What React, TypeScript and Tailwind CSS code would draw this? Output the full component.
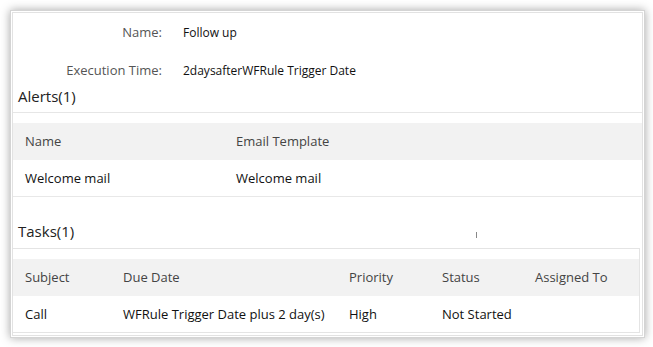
export default function App() {
  const font = { fontFamily: '"Open Sans", "Liberation Sans", sans-serif' };
  return (
    <div className="h-[347px] w-[653px] bg-white pl-[10px] pt-[10px]" style={font}>
      <div className="w-[635px] border border-[#d4d4d4] bg-white p-px shadow-[0_0_9px_rgba(0,0,0,0.35)]">
        <div className="flex h-[324px] flex-col border border-[#e2e2e2] text-[13px]">
          {/* details */}
          <div className="flex flex-col gap-[18px] pt-[10px]">
            <div className="flex h-[20px] items-center">
              <span className="w-[149px] text-right text-[#555]">Name:</span>
              <span className="ml-[21px] text-[12px] text-[#111]">Follow up</span>
            </div>
            <div className="flex h-[20px] items-center">
              <span className="w-[149px] text-right text-[#555]">Execution Time:</span>
              <span className="ml-[21px] text-[12px] text-[#111]">2daysafterWFRule Trigger Date</span>
            </div>
          </div>

          {/* alerts */}
          <div className="mt-[5px] border-b border-[#e6e6e6] pb-[6px] pl-[5px] text-[15px] leading-[20px] text-[#222]">
            Alerts(1)
          </div>
          <div className="mt-[10px] border-b border-[#e8e8e8]">
            <div className="flex h-[37px] items-center bg-[#f2f2f2] pt-px text-[#444]">
              <span className="w-[211px] pl-[12px]">Name</span>
              <span className="pl-[12px]">Email Template</span>
            </div>
            <div className="flex h-[36px] items-center pt-px text-[#111]">
              <span className="w-[211px] pl-[12px]">Welcome mail</span>
              <span className="pl-[12px]">Welcome mail</span>
            </div>
          </div>

          {/* tasks */}
          <div className="relative mt-[24px] h-[20px] pl-[5px] text-[15px] leading-[20px] text-[#222]">
            Tasks(1)
            <span className="absolute left-[463px] top-[11px] h-[6px] w-px bg-[#888]" />
          </div>
          <div className="mr-[2px] mt-[7px] border border-l-0 border-[#e4e4e4] pt-[10px]">
            <div className="flex h-[37px] items-center bg-[#f2f2f2] pt-px text-[#444]">
              <span className="w-[98px] pl-[12px]">Subject</span>
              <span className="w-[226px] pl-[12px]">Due Date</span>
              <span className="w-[93px] pl-[12px]">Priority</span>
              <span className="w-[93px] pl-[12px]">Status</span>
              <span className="pl-[12px]">Assigned To</span>
            </div>
            <div className="flex h-[36px] items-center pt-px text-[#111]">
              <span className="w-[98px] pl-[12px]">Call</span>
              <span className="w-[226px] pl-[12px]">WFRule Trigger Date plus 2 day(s)</span>
              <span className="w-[93px] pl-[12px]">High</span>
              <span className="w-[93px] pl-[12px]">Not Started</span>
              <span className="pl-[12px]"></span>
            </div>
          </div>
        </div>
      </div>
    </div>
  );
}
